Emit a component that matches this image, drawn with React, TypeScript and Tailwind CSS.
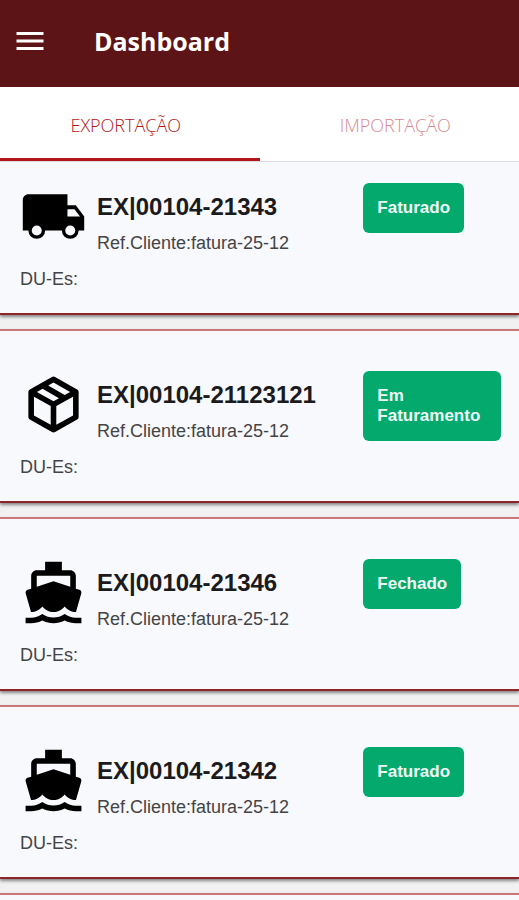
import clsx from "clsx";
import { useState } from "react";
import type { ComponentType } from "react";
import { MdMenu } from "react-icons/md";

type Transport = "truck" | "package" | "boat";

interface Process {
  code: string;
  reference: string;
  status: string;
  transport: Transport;
}

interface IconProps {
  className?: string;
}

const TruckIcon = ({ className }: IconProps) => (
  <svg viewBox="0 0 24 24" fill="currentColor" className={className}>
    <path
      fillRule="evenodd"
      d="M20 8l3 4v5h-2a3 3 0 0 1-6 0H9a3 3 0 0 1-6 0H1V6c0-1.11.89-2 2-2h14v4h3zM18 18.8a1.8 1.8 0 1 0 0-3.6 1.8 1.8 0 0 0 0 3.6zM6 18.8a1.8 1.8 0 1 0 0-3.6 1.8 1.8 0 0 0 0 3.6zM19.5 9.4H17V12h4.5l-2-2.6z"
    />
  </svg>
);

const PackageIcon = ({ className }: IconProps) => (
  <svg viewBox="0 0 24 24" fill="currentColor" className={className}>
    <path d="M21,16.5C21,16.88 20.79,17.21 20.47,17.38L12.57,21.82C12.41,21.94 12.21,22 12,22C11.79,22 11.59,21.94 11.43,21.82L3.53,17.38C3.21,17.21 3,16.88 3,16.5V7.5C3,7.12 3.21,6.79 3.53,6.62L11.43,2.18C11.59,2.06 11.79,2 12,2C12.21,2 12.41,2.06 12.57,2.18L20.47,6.62C20.79,6.79 21,7.12 21,7.5V16.5M12,4.15L10.11,5.22L16,8.61L17.96,7.5L12,4.15M6.04,7.5L12,10.85L13.96,9.75L8.08,6.35L6.04,7.5M5,15.91L11,19.29V12.58L5,9.21V15.91M19,15.91V9.21L13,12.58V19.29L19,15.91Z" />
  </svg>
);

const BoatIcon = ({ className }: IconProps) => (
  <svg viewBox="0 0 24 24" fill="currentColor" className={className}>
    <path d="M20 21c-1.39 0-2.78-.47-4-1.32-2.44 1.71-5.56 1.71-8 0C6.78 20.53 5.39 21 4 21H2v2h2c1.38 0 2.74-.35 4-.99 2.52 1.29 5.48 1.29 8 0 1.26.65 2.62.99 4 .99h2v-2h-2zM3.95 19H4c1.6 0 3.02-.88 4-2 .98 1.12 2.4 2 4 2s3.02-.88 4-2c.98 1.12 2.4 2 4 2h.05l1.89-6.68c.08-.26.06-.54-.06-.78s-.34-.42-.6-.5L20 10.62V6c0-1.1-.9-2-2-2h-3V1H9v3H6c-1.1 0-2 .9-2 2v4.62l-1.29.42c-.26.08-.48.26-.6.5s-.15.52-.06.78L3.95 19zM6 6h12v3.97L12 8 6 9.97V6z" />
  </svg>
);

const icons: Record<Transport, ComponentType<IconProps>> = {
  truck: TruckIcon,
  package: PackageIcon,
  boat: BoatIcon,
};

const processes: Process[] = [
  {
    code: "EX|00104-21343",
    reference: "fatura-25-12",
    status: "Faturado",
    transport: "truck",
  },
  {
    code: "EX|00104-21123121",
    reference: "fatura-25-12",
    status: "Em Faturamento",
    transport: "package",
  },
  {
    code: "EX|00104-21346",
    reference: "fatura-25-12",
    status: "Fechado",
    transport: "boat",
  },
  {
    code: "EX|00104-21342",
    reference: "fatura-25-12",
    status: "Faturado",
    transport: "boat",
  },
];

const tabs = ["EXPORTAÇÃO", "IMPORTAÇÃO"];

const cardClass =
  "min-h-[174px] border-t-2 border-b-2 border-t-[#c9777b] border-b-[#8f2429] bg-[#f8f9fd] shadow-[0_2px_3px_rgba(0,0,0,0.45)]";

const ProcessCard = ({ code, reference, status, transport }: Process) => {
  const Icon = icons[transport];

  return (
    <li className={clsx(cardClass, "flex pt-10")}>
      <div className="min-w-0 flex-1 pl-5">
        <div className="flex gap-2.5">
          <Icon className="h-[67px] w-[67px] shrink-0 text-black" />
          <div className="pt-2">
            <h2 className="text-2xl leading-8 font-bold whitespace-nowrap text-[#1b1b1d]">
              {code}
            </h2>
            <p className="pt-2 text-lg leading-6 whitespace-nowrap">
              Ref.Cliente:{reference}
            </p>
          </div>
        </div>
        <p className="pt-3 text-lg leading-6">DU-Es:</p>
      </div>
      <div className="w-[30%] shrink-0 pr-4.5">
        <span className="inline-block rounded-md bg-[#04a96d] px-3.5 py-[15px] text-[17px] leading-5 font-bold text-[#effaf5]">
          {status}
        </span>
      </div>
    </li>
  );
};

export default function App() {
  const [activeTab, setActiveTab] = useState(tabs[0]);

  return (
    <div className="flex h-screen flex-col bg-[#f1f1f1] font-['Liberation_Sans',Arial,sans-serif] text-[#444446]">
      <header className="flex h-[87px] shrink-0 items-center gap-[46px] bg-[#5c1416] px-3 pb-1.5 text-white">
        <button type="button" aria-label="Menu">
          <MdMenu className="h-9 w-9" />
        </button>
        <h1 className="font-['Open_Sans','Noto_Sans',sans-serif] text-[25px] leading-8 font-bold">
          Dashboard
        </h1>
      </header>

      <div
        role="tablist"
        className="flex h-[75px] shrink-0 border-b border-[#dcdde1] bg-white"
      >
        {tabs.map((tab) => (
          <button
            key={tab}
            type="button"
            role="tab"
            aria-selected={tab === activeTab}
            onClick={() => setActiveTab(tab)}
            className={clsx(
              "w-1/2 border-b-3 pt-1 font-['Open_Sans','Noto_Sans',sans-serif] text-lg font-light first:pr-2 last:pl-3",
              tab === activeTab
                ? "border-[#b5161b] text-[#b5161b]"
                : "border-transparent text-[#d98a94]",
            )}
          >
            {tab}
          </button>
        ))}
      </div>

      <main className="min-h-0 flex-1 overflow-y-auto [scrollbar-width:none]">
        <ul className="-mt-[21px] flex flex-col gap-3.5">
          {processes.map((process) => (
            <ProcessCard key={process.code} {...process} />
          ))}
          <li aria-hidden="true" className={cardClass} />
        </ul>
      </main>
    </div>
  );
}
